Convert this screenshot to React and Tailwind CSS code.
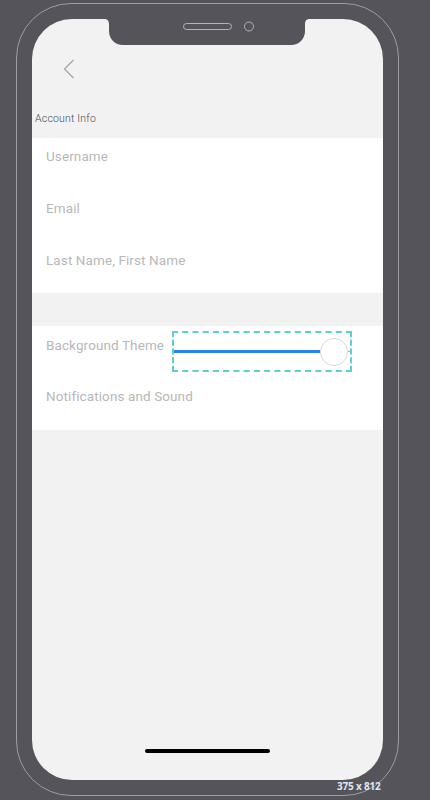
import React from "react";

function Notch() {
  return (
    <svg
      className="absolute left-[72px] top-0"
      width="206"
      height="27"
      viewBox="0 0 206 27"
    >
      <path
        d="M0 0 C4 0 5 2 5 6 V12 C5 20 11 26 19 26 H187 C195 26 201 20 201 12 V6 C201 2 202 0 206 0 Z"
        fill="#55545a"
      />
      <rect x="79.5" y="4.5" width="48" height="6" rx="3" fill="none" stroke="#b4b3b8" strokeWidth="1" />
      <circle cx="145" cy="7.5" r="4.5" fill="none" stroke="#b4b3b8" strokeWidth="1" />
    </svg>
  );
}

export default function App() {
  const label = "text-[13.5px] leading-[16px] tracking-[0.1px] text-[#b8b8b8]";
  return (
    <div
      className="relative w-[430px] h-[800px] overflow-hidden bg-[#55545a] pt-[3px] pl-[16px]"
      style={{ fontFamily: "Roboto, 'Liberation Sans', sans-serif" }}
    >
      <div className="w-[383px] h-[793px] rounded-[55px] border border-[#9e9da3] p-[15px]">
        <div className="relative flex h-full w-full flex-col overflow-hidden rounded-[40px] bg-[#f2f2f2]">
          <Notch />
          <div className="h-[90px] pl-[31px] pt-[40px]">
            <svg width="12" height="20" viewBox="0 0 12 20">
              <path d="M10.5 1 L1.5 10 L10.5 19" fill="none" stroke="#a6a6a6" strokeWidth="1.3" />
            </svg>
          </div>
          <div className="h-[29px] pl-[3px] pt-[3px] text-[10.5px] font-light leading-[14px] tracking-[0.2px] text-[#4a4a4a]">
            Account Info
          </div>
          <div className="flex h-[155px] flex-col gap-[36px] bg-white pl-[14px] pt-[10px]">
            <div className={label}>Username</div>
            <div className={label}>Email</div>
            <div className={label}>Last Name, First Name</div>
          </div>
          <div className="h-[33px]" />
          <div className="flex h-[104px] flex-col gap-[35px] bg-white pl-[14px] pt-[11px]">
            <div className="flex h-[16px] items-start">
              <div className={`${label} w-[126px] shrink-0 whitespace-nowrap`}>Background Theme</div>
              <div className="-mt-[6px] flex h-[41px] w-[180px] shrink-0 items-center border-2 border-dashed border-[#5ccfd2]">
                <div className="h-[2.5px] flex-1 bg-[#2d7ff5]" />
                <div className="h-[28px] w-[28px] shrink-0 rounded-full border-[1.5px] border-[#d9d9d9] bg-white" />
                <div className="h-[1px] w-[2px] bg-[#aaaaaa]" />
              </div>
            </div>
            <div className={label}>Notifications and Sound</div>
          </div>
          <div className="flex-1" />
          <div className="mx-auto mb-[27px] h-[4px] w-[125px] rounded-full bg-black" />
        </div>
      </div>
      <div
        className="absolute left-[337px] top-[780px] text-[10px] font-bold leading-[13px] tracking-[-0.2px] text-[#dfe6f2]"
        style={{ fontFamily: "'Open Sans', 'Liberation Sans', sans-serif" }}
      >
        375 x 812
      </div>
    </div>
  );
}
